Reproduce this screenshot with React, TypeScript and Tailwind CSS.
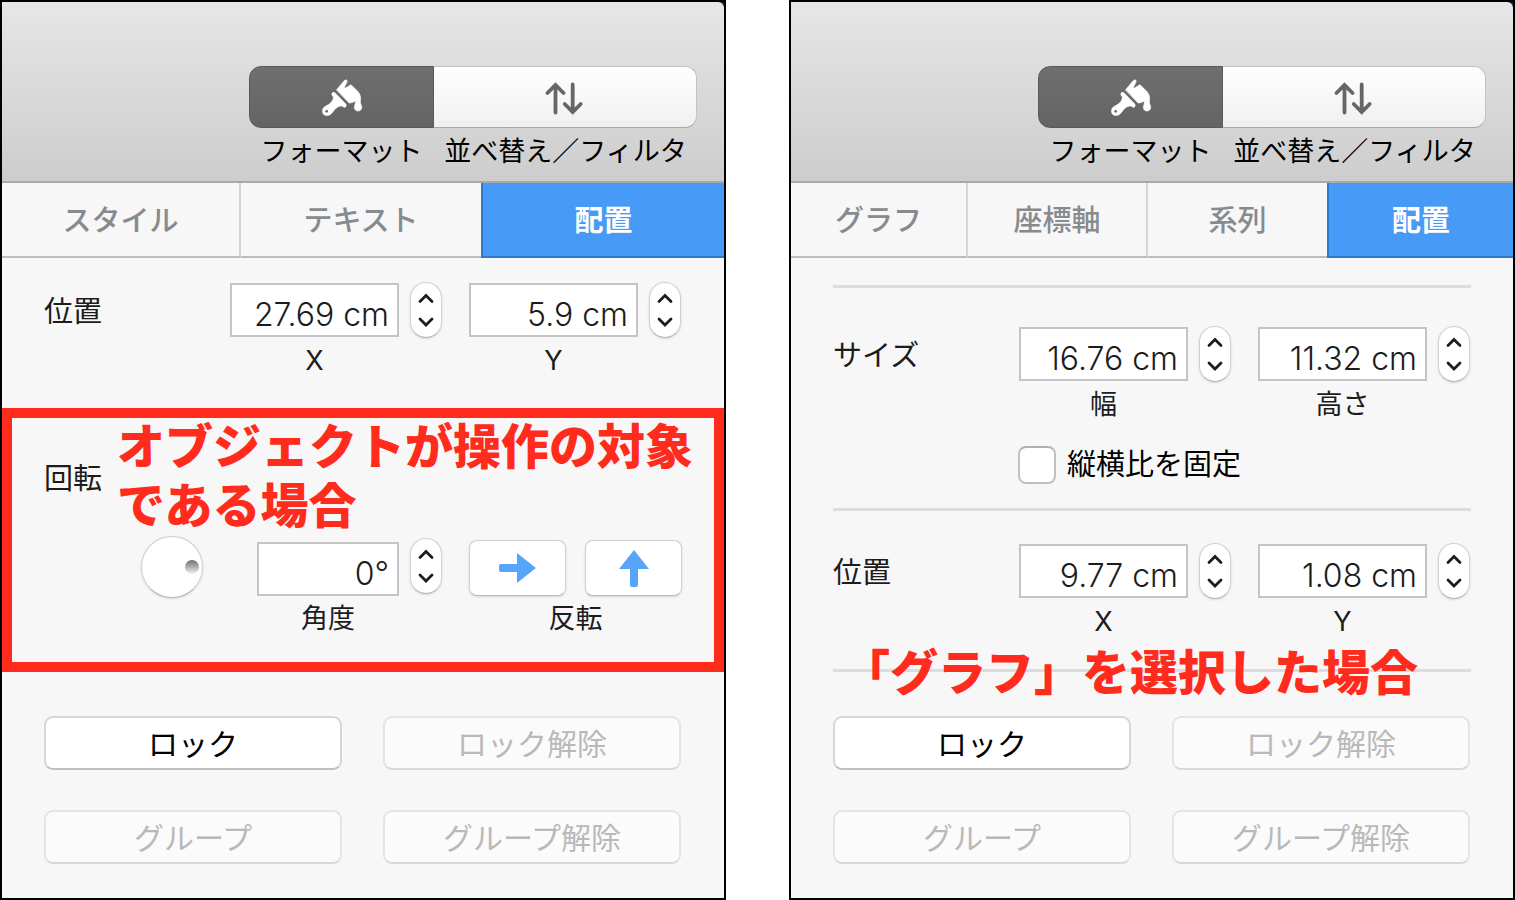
import { useId, useState } from "react";
import type { ReactNode } from "react";

function BrushIcon() {
  return (
    <svg viewBox="0 0 180 180" className="size-[60px]" aria-hidden="true">
      <g fill="#fff" stroke="#fff" strokeLinejoin="round" strokeLinecap="round">
        <path d="M65 73L97 106" strokeWidth="13" fill="none" />
        <path
          d="M64 74L96 108C82 107 74 112 67 120C60 130 56 137 44 137C36 137 31 131 31 124C31 112 40 109 50 103C60 96 65 88 64 74Z"
          strokeWidth="1"
        />
        <path
          d="M74 59L96 33C100 27 108 30 105 36L98 50C97 54 100 55 104 52L117 44L137 64C146 74 147 84 145 96C145 103 150 107 149 114C148 120 143 123 138 123C131 123 127 118 127 112C128 105 131 99 130 93C124 97 117 99 112 99Z"
          strokeWidth="2"
        />
      </g>
      <circle cx="44" cy="124" r="4" fill="#666" />
    </svg>
  );
}

function SortIcon() {
  return (
    <svg viewBox="0 0 40 36" className="h-9 w-10" aria-hidden="true">
      <g fill="none" stroke="#666" strokeWidth="3.8" strokeLinecap="round">
        <path d="M10.5 31.5V5M2.5 12L10.5 4L18.5 12" />
        <path d="M27.7 3.5V30M19.7 23L27.7 31L35.7 23" />
      </g>
    </svg>
  );
}

function Toolbar() {
  return (
    <div className="bg-[#10293a]">
      <div className="flex h-[181px] justify-end rounded-tr-md border-b-2 border-[#a9a9a9] bg-linear-to-b from-[#e6e6e6] to-[#cdcdcd] pt-16 pr-[27px]">
        <div className="grid auto-rows-min grid-cols-[185px_263px] text-center text-[27px] leading-[48px] text-black">
          <button
            aria-label="フォーマット"
            className="flex h-[62px] items-center justify-center rounded-l-xl border border-[#595959] bg-linear-to-b from-[#6f6f6f] to-[#646464] pt-1.5"
          >
            <BrushIcon />
          </button>
          <button
            aria-label="並べ替え／フィルタ"
            className="flex h-[62px] items-center justify-center rounded-r-xl border border-l-0 border-[#c2c2c2] border-b-[#a8a8a8] bg-linear-to-b from-white to-[#f0f0f0] pt-1"
          >
            <SortIcon />
          </button>
          <span>フォーマット</span>
          <span>並べ替え／フィルタ</span>
        </div>
      </div>
    </div>
  );
}

function Tabs({ names, cols }: { names: string[]; cols: string }) {
  const [active, setActive] = useState("配置");

  return (
    <div role="tablist" className={`grid h-[75px] text-[29px] ${cols}`}>
      {names.map((name) => (
        <button
          key={name}
          role="tab"
          aria-selected={name === active}
          onClick={() => setActive(name)}
          className={
            name === active
              ? "border-b-2 border-l-2 border-[#2c7ac9] bg-[#489af7] pt-[3px] font-bold text-white"
              : "border-r-2 border-b-2 border-r-[#d3d7da] border-b-[#b9bfc4] pt-[3px] font-medium text-[#888b8e] nth-last-2:border-r-0"
          }
        >
          {name}
        </button>
      ))}
    </div>
  );
}

function Stepper() {
  return (
    <div className="flex h-14 w-8 flex-col self-start rounded-2xl border border-[#d0d0d0] border-b-[#b8b8b8] bg-white shadow-sm">
      <button aria-label="増やす" className="flex-1">
        <svg viewBox="0 0 30 27" aria-hidden="true">
          <path d="M9 18.5L15 12.5L21 18.5" fill="none" stroke="#1c1c1c" strokeWidth="2.8" strokeLinecap="round" />
        </svg>
      </button>
      <button aria-label="減らす" className="flex-1">
        <svg viewBox="0 0 30 27" aria-hidden="true">
          <path d="M9 9L15 15L21 9" fill="none" stroke="#1c1c1c" strokeWidth="2.8" strokeLinecap="round" />
        </svg>
      </button>
    </div>
  );
}

function Field({ caption, initial, narrow }: { caption: string; initial: string; narrow?: boolean }) {
  const id = useId();
  const [value, setValue] = useState(initial);

  return (
    <div
      className={`grid items-center gap-x-[11px] ${narrow ? "grid-cols-[142px_32px] grid-rows-[58px_auto] items-end" : "grid-cols-[169px_32px]"}`}
    >
      <input
        id={id}
        value={value}
        onChange={(e) => setValue(e.target.value)}
        className="h-[54px] w-full min-w-0 border-2 border-[#c4c4c4] bg-white pt-2 pr-2 text-right text-[32px] font-light text-[#1c1c1c]"
      />
      <Stepper />
      <label htmlFor={id} className="text-center text-[27px] leading-[46px]">
        {caption}
      </label>
    </div>
  );
}

function Row({ title, children }: { title: string; children: ReactNode }) {
  return (
    <div role="group" aria-label={title} className="flex items-start justify-between">
      <span className="text-[29px] leading-[60px]">{title}</span>
      <div className="flex gap-[27px]">{children}</div>
    </div>
  );
}

function Dial() {
  return (
    <label className="relative mr-[54px] -mt-0.5 size-[62px] rounded-full border border-[#cfcfcf] border-b-[#b5b5b5] bg-white shadow-sm">
      <input type="range" min={0} max={360} defaultValue={0} aria-label="回転角度" className="sr-only" />
      <span className="absolute top-[23px] right-[3px] size-[14px] rounded-full bg-linear-to-b from-[#6f6f6f] to-[#f4f4f4]" />
    </label>
  );
}

function FlipButton({ label, d }: { label: string; d: string }) {
  return (
    <button
      aria-label={label}
      className="flex h-14 w-[97px] items-center justify-center rounded-lg border border-[#d0d0d0] border-b-[#b8b8b8] bg-white shadow-sm"
    >
      <svg viewBox="0 0 38 38" className="size-[38px]" aria-hidden="true">
        <path d={d} fill="#56a5f8" />
      </svg>
    </button>
  );
}

function Actions() {
  const actions = ["ロック", "ロック解除", "グループ", "グループ解除"];

  return (
    <div className="grid grid-cols-2 gap-x-[41px] gap-y-10 pr-[43px] pl-[42px]">
      {actions.map((name) => (
        <button
          key={name}
          disabled={name !== "ロック"}
          className="h-[54px] rounded-[9px] border-2 border-[#d6d6d6] border-b-[#c0c0c0] bg-white pt-[3px] text-[30px] text-black disabled:border-[#e4e4e4] disabled:border-b-[#d8d8d8] disabled:bg-[#fbfbfb] disabled:text-[#b9b9b9]"
        >
          {name}
        </button>
      ))}
    </div>
  );
}

function Panel({ children }: { children: ReactNode }) {
  return (
    <section className="flex min-h-screen flex-col border-2 border-black bg-[#f7f7f7] text-[#1c1c1c]">
      <Toolbar />
      {children}
    </section>
  );
}

function ObjectPanel() {
  return (
    <Panel>
      <Tabs names={["スタイル", "テキスト", "配置"]} cols="grid-cols-[239fr_240fr_243fr]" />
      <div className="pt-6 pr-[43px] pb-6 pl-[42px]">
        <Row title="位置">
          <Field caption="X" initial="27.69 cm" />
          <Field caption="Y" initial="5.9 cm" />
        </Row>
      </div>

      <div className="relative border-[10px] border-[#ff2b1d] px-8 pt-8 pb-5">
        <p className="text-[29px] leading-[58px]">回転</p>
        <div className="mt-[30px] flex items-start justify-end">
          <Dial />
          <Field caption="角度" initial="0°" narrow />
          <div className="ml-[27px] flex flex-col pt-0.5">
            <div className="flex gap-[19px]">
              <FlipButton label="左右に反転" d="M2 15H18V4L37 19L18 34V23H2Q0 23 0 21V17Q0 15 2 15Z" />
              <FlipButton label="上下に反転" d="M15 36V20H4L19 1L34 20H23V36Q23 38 21 38H17Q15 38 15 36Z" />
            </div>
            <span className="text-center text-[27px] leading-[46px]">反転</span>
          </div>
        </div>
        <p className="absolute -top-px left-[105px] text-[48px] leading-[59px] font-black whitespace-nowrap text-[#ff2b1d]">
          オブジェクトが操作の対象
          <br />
          である場合
        </p>
      </div>

      <div className="pt-11 pb-[34px]">
        <Actions />
      </div>
    </Panel>
  );
}

function ChartPanel() {
  return (
    <Panel>
      <Tabs names={["グラフ", "座標軸", "系列", "配置"]} cols="grid-cols-[177fr_180fr_179fr_186fr]" />
      <hr className="mx-[42px] mt-[27px] border-t-[3px] border-[#dcdcdc]" />
      <div className="pt-[38px] pr-[43px] pb-6 pl-[42px]">
        <Row title="サイズ">
          <Field caption="幅" initial="16.76 cm" />
          <Field caption="高さ" initial="11.32 cm" />
        </Row>
        <div className="mt-[18px] flex justify-end">
          <label className="flex w-[452px] items-center gap-[11px] text-[29px] leading-[38px] text-black">
            <input
              type="checkbox"
              className="size-[38px] appearance-none rounded-lg border-2 border-[#c0c0c0] border-t-[#b0b0b0] bg-white checked:bg-[#489af7]"
            />
            縦横比を固定
          </label>
        </div>
      </div>
      <hr className="mx-[42px] border-t-[3px] border-[#dcdcdc]" />
      <div className="pt-8 pr-[43px] pb-6 pl-[42px]">
        <Row title="位置">
          <Field caption="X" initial="9.77 cm" />
          <Field caption="Y" initial="1.08 cm" />
        </Row>
      </div>
      <div className="relative">
        <hr className="mx-[42px] border-t-[3px] border-[#dcdcdc]" />
        <p className="absolute -top-[26px] left-[51px] text-[48px] leading-[59px] font-black whitespace-nowrap text-[#ff2b1d]">
          「グラフ」を選択した場合
        </p>
      </div>
      <div className="pt-11 pb-[34px]">
        <Actions />
      </div>
    </Panel>
  );
}

export default function App() {
  return (
    <main className="grid min-h-screen grid-cols-2 gap-[63px] bg-white font-[Inter,'Noto_Sans_CJK_JP',sans-serif]">
      <ObjectPanel />
      <ChartPanel />
    </main>
  );
}
